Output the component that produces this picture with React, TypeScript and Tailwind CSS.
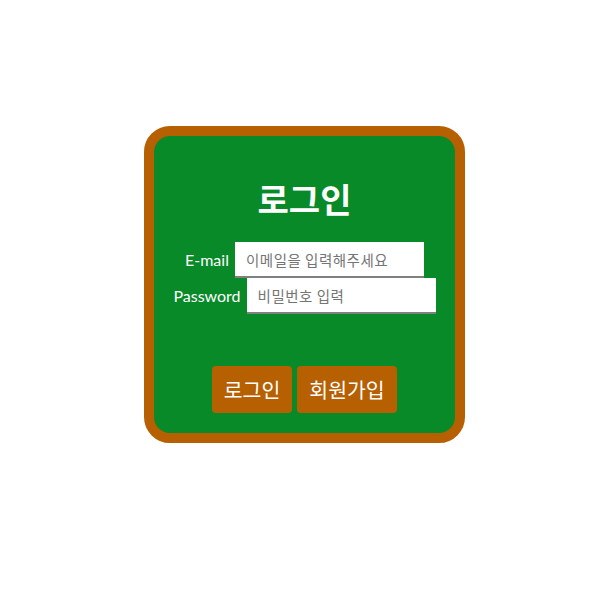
import React, { useState } from 'react';

const labelFont = { fontFamily: "Lato, 'Noto Sans CJK KR', sans-serif" };

const LoginBox: React.FC = () => {
  const [email, setEmail] = useState('');
  const [password, setPassword] = useState('');

  return (
    <div className="w-[321px] h-[317px] border-[10px] border-[#b66002] rounded-[26px] bg-[#088a29] flex flex-col items-center font-['Noto_Sans_CJK_KR',sans-serif]">
      {/* 제목 */}
      <h1 className="mt-[43px] text-[34px] leading-[40px] font-bold text-white">로그인</h1>

      {/* 입력 영역 */}
      <div className="mt-[23px] flex flex-col items-center">
        <div className="flex items-center justify-center gap-[6px] h-[36px]">
          <label className="text-white text-[16px]" style={labelFont}>E-mail</label>
          <input
            type="email"
            value={email}
            onChange={(e) => setEmail(e.target.value)}
            placeholder="이메일을 입력해주세요"
            className="w-[189px] h-[36px] bg-white border-b-2 border-[#808080] pl-[11px] text-[14.5px] tracking-[0.5px] text-black placeholder:text-[#757575] outline-none"
          />
        </div>
        <div className="flex items-center justify-center gap-[6px] h-[36px]">
          <label className="text-white text-[16px]" style={labelFont}>Password</label>
          <input
            type="password"
            value={password}
            onChange={(e) => setPassword(e.target.value)}
            placeholder="비밀번호 입력"
            className="w-[189px] h-[36px] bg-white border-b-2 border-[#808080] pl-[11px] text-[14.5px] tracking-[0.5px] text-black placeholder:text-[#757575] outline-none"
          />
        </div>
      </div>

      {/* 버튼 영역 */}
      <div className="mt-[52px] flex gap-[5px]">
        <button className="w-[80px] h-[47px] rounded-[4px] bg-[#b66002] text-white text-[20.5px]">로그인</button>
        <button className="w-[100px] h-[47px] rounded-[4px] bg-[#b66002] text-white text-[20.5px]">회원가입</button>
      </div>
    </div>
  );
};

export default function App() {
  return (
    <div className="min-h-[599px] bg-white pt-[126px] pl-[144px]">
      <LoginBox />
    </div>
  );
}
